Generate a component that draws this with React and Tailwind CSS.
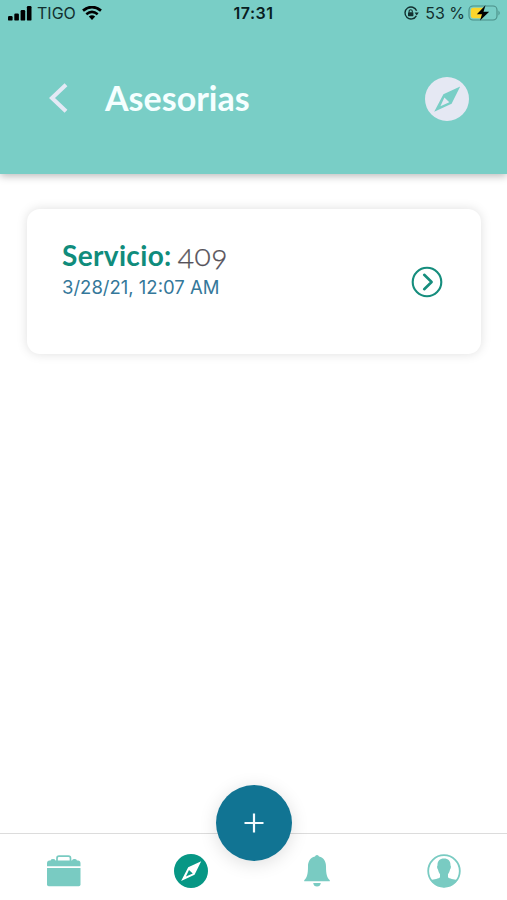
import React from 'react'

function Compass({ className }) {
  return (
    <svg viewBox="0 0 44 44" className={className}>
      <path
        fill="currentColor"
        fillRule="evenodd"
        d="M22 0a22 22 0 1 1 0 44a22 22 0 1 1 0-44ZM35.2 9.4L18.4 17.2L9.2 34.8L26.6 26.8ZM19.4 20.6L24.3 25.2L15.4 29.2Z"
      />
    </svg>
  )
}

function StatusBar() {
  return (
    <div className="relative flex h-[26px] items-center justify-between pl-2 pr-[5px] text-[#12302f] font-['Inter',sans-serif]">
      <div className="flex items-center">
        <svg viewBox="0 0 24 15" className="h-[15px] w-6 text-black" fill="currentColor">
          <rect x="0" y="10" width="4.6" height="4.6" rx="1.2" />
          <rect x="6.3" y="7.5" width="4.6" height="7.1" rx="1.2" />
          <rect x="12.6" y="4" width="4.6" height="10.6" rx="1.2" />
          <rect x="18.9" y="0" width="4.6" height="14.6" rx="1.2" />
        </svg>
        <span className="ml-[5px] text-[16px]">TIGO</span>
        <svg viewBox="0 0 20 14" className="ml-1.5 h-[14px] w-5 text-black" fill="none" stroke="currentColor">
          <path d="M1 4.6Q10 -2.4 19 4.6" strokeWidth="2.8" />
          <path d="M4.3 8.2Q10 3.6 15.7 8.2" strokeWidth="2.6" />
          <path d="M6.8 10.5Q10 8 13.2 10.5L10 14Z" fill="currentColor" stroke="none" />
        </svg>
      </div>
      <span className="absolute left-1/2 -translate-x-1/2 text-[16px] font-semibold tracking-[0.5px] text-[#08201f]">17:31</span>
      <div className="flex items-center">
        <svg viewBox="0 0 16 16" className="h-4 w-4" fill="none" stroke="currentColor" strokeWidth="1.4">
          <path d="M13.3 10.8A6 6 0 1 1 13.6 5.8" />
          <path d="M11.6 7.4h4.2l-2.1 3Z" fill="currentColor" stroke="none" />
          <rect x="5" y="7.2" width="5.4" height="4" rx="0.6" fill="currentColor" stroke="none" />
          <path d="M6.1 7.5V6.3a1.6 1.6 0 0 1 3.2 0v1.2" strokeWidth="1.1" />
        </svg>
        <span className="ml-1.5 text-[16px]">53 %</span>
        <svg viewBox="0 0 34 18" className="ml-[3px] h-[18px] w-[34px]">
          <rect x="1" y="2" width="28" height="14" rx="4" fill="none" stroke="#4a8e87" strokeWidth="1.1" />
          <path d="M5.5 3.8H15V14.2H5.5Q2.8 14.2 2.8 11.5V6.5Q2.8 3.8 5.5 3.8Z" fill="#fcd52c" />
          <path d="M30.5 6.5q2.4 2.5 0 5Z" fill="#4a8e87" />
          <path d="M17.5 1.2L8.8 10.2h5.2L12 16.6l9.2-8.8h-5.7Z" fill="#000" />
        </svg>
      </div>
    </div>
  )
}

function Header() {
  return (
    <header className="h-[174px] bg-[#79cec6] shadow-[0_2px_8px_rgba(0,0,0,0.28)]">
      <StatusBar />
      <div className="flex items-center pl-[49px] pr-[38px] pt-[51px]">
        <svg viewBox="0 0 20 30" className="-mt-0.5 h-[30px] w-5" fill="none" stroke="#e4e9f5" strokeWidth="4.1">
          <path d="M17 1.8L3 15L17 28.2" />
        </svg>
        <h1 className="-mt-[3px] ml-9 font-['Lato',sans-serif] text-[34px] font-bold leading-[44px] text-[#f5ffff]">Asesorias</h1>
        <Compass className="ml-auto h-11 w-11 text-[#e5e8f3]" />
      </div>
    </header>
  )
}

function ServiceCard() {
  return (
    <section className="ml-[27px] mr-[26px] mt-[35px] flex h-[145px] items-center justify-between rounded-[13px] bg-white pl-[35px] pr-[38px] shadow-[0_0_11px_rgba(0,0,0,0.13)]">
      <div className="-mt-[25px]">
        <h2 className="flex items-baseline leading-[36px]">
          <span className="font-['Lato',sans-serif] text-[28px] font-bold tracking-[0.35px] text-[#108c7c]">Servicio:</span>
          <span className="ml-[6px] font-['Lato',sans-serif] text-[30px] font-light leading-[30px] tracking-[0.6px] text-[#555159] [font-feature-settings:'onum'] [-webkit-text-stroke:0.3px_#555159]">409</span>
        </h2>
        <p className="font-['Inter',sans-serif] text-[18.5px] leading-[28px] text-[#35789a]">3/28/21, 12:07 AM</p>
      </div>
      <svg viewBox="0 0 32 32" className="h-8 w-8" fill="none" stroke="#158d7d" strokeLinecap="round" strokeLinejoin="round">
        <circle cx="16" cy="16" r="14.3" strokeWidth="2.1" />
        <path d="M13.2 8.8L20.6 16L13.2 23.2" strokeWidth="2.6" />
      </svg>
    </section>
  )
}

function TabBar() {
  return (
    <nav className="relative mt-auto flex h-[67px] items-center border-t border-[#dcdcdc] bg-white pt-[7px] text-[#79cbc2]">
      <svg viewBox="0 0 34 32" className="ml-[47px] h-8 w-[34px]">
        <path d="M10 6V3.2Q10 1.2 12 1.2H21.5Q23.5 1.2 23.5 3.2V6" fill="none" stroke="currentColor" strokeWidth="1.7" />
        <path d="M0 11.2V8.3Q0 5.6 2.5 5.4H3.5Q4 4 6 4Q8 4 8.5 5.4H25Q25.5 4 27.5 4Q29.5 4 30 5.4H31Q33.5 5.6 33.5 8.3V11.2Z" fill="currentColor" />
        <path d="M0 13H33.5V29.5Q33.5 31.2 31.8 31.2H1.7Q0 31.2 0 29.5Z" fill="currentColor" />
      </svg>
      <Compass className="ml-[93px] h-[34px] w-[34px] text-[#079785]" />
      <svg viewBox="0 0 28 32" className="ml-[95px] h-8 w-7" fill="currentColor">
        <path d="M14 0C15.2 0 15.6 0.8 16 1.6C20.8 2.8 23 6.6 23 11.5C23 19.5 24.2 23 26.8 25.3V26.2H1.2V25.3C3.8 23 5 19.5 5 11.5C5 6.6 7.2 2.8 12 1.6C12.4 0.8 12.8 0 14 0Z" />
        <path d="M10.2 28H17.8Q17.3 31.5 14 31.5Q10.7 31.5 10.2 28Z" />
      </svg>
      <svg viewBox="0 0 34 34" className="ml-24 h-[34px] w-[34px]">
        <circle cx="17" cy="17" r="15.8" fill="none" stroke="currentColor" strokeWidth="1.8" />
        <path d="M17 4.5C21.5 4.5 23.7 7.3 23.5 11.5C24.2 12 24 14.6 23 15.5C22.6 17.5 21.8 19 21 20.2V23.3C22 25 27 25 30.2 26.2A16 16 0 0 1 3.8 26.2C7 25 12 25 13 23.3V20.2C12.2 19 11.4 17.5 11 15.5C10 14.6 9.8 12 10.5 11.5C10.3 7.3 12.5 4.5 17 4.5Z" fill="currentColor" />
      </svg>
      <button className="absolute -top-[49px] left-[216px] flex h-[76px] w-[76px] items-center justify-center rounded-full bg-[#117493] shadow-[0_3px_18px_rgba(0,0,0,0.13)]">
        <svg viewBox="0 0 20 20" className="h-5 w-5" fill="none" stroke="#f3fbff" strokeWidth="2.2">
          <path d="M10 0.5V19.5M0.5 10H19.5" />
        </svg>
      </button>
    </nav>
  )
}

export default function App() {
  return (
    <div className="flex h-[900px] w-[507px] flex-col overflow-hidden bg-white">
      <Header />
      <ServiceCard />
      <TabBar />
    </div>
  )
}
